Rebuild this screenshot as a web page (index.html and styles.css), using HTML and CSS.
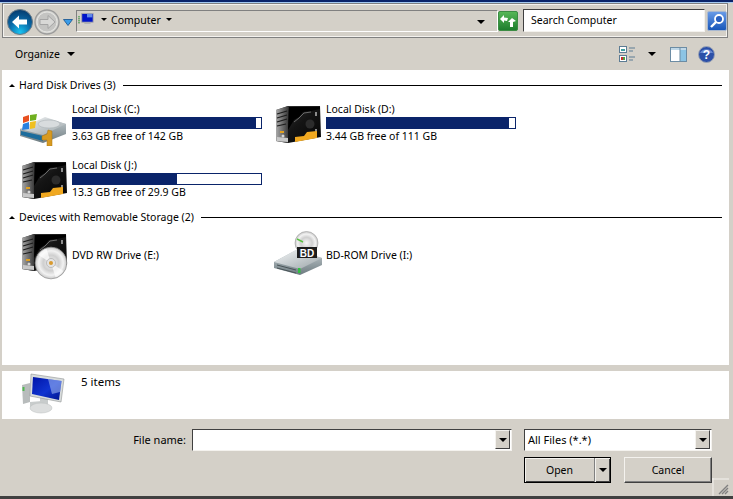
FILE: index.html
```html
<!DOCTYPE html>
<html lang="en">

<head>
    <meta charset="UTF-8">
    <meta name="viewport" content="width=device-width, initial-scale=1.0">
    <title>Computer</title>
    <link rel="stylesheet" href="styles.css">
</head>

<body>
    <svg class="defs" aria-hidden="true">
        <defs>
            <linearGradient id="towerBody" x1="0" y1="0" x2="1" y2="1">
                <stop offset="0" stop-color="#3a3a3a" />
                <stop offset="0.5" stop-color="#141414" />
                <stop offset="1" stop-color="#050505" />
            </linearGradient>
            <linearGradient id="towerSide" x1="0" y1="0" x2="1" y2="0">
                <stop offset="0" stop-color="#a8a8a8" />
                <stop offset="1" stop-color="#3c3c3c" />
            </linearGradient>
            <linearGradient id="diskTop" x1="0" y1="0" x2="1" y2="1">
                <stop offset="0" stop-color="#f4f6f7" />
                <stop offset="1" stop-color="#9aa4a8" />
            </linearGradient>
            <linearGradient id="diskFront" x1="0" y1="0" x2="0" y2="1">
                <stop offset="0" stop-color="#c4ccd0" />
                <stop offset="1" stop-color="#6d7b80" />
            </linearGradient>
            <radialGradient id="discFace" cx="0.5" cy="0.5" r="0.55">
                <stop offset="0" stop-color="#f8f8f8" />
                <stop offset="0.45" stop-color="#cfcfcf" />
                <stop offset="0.7" stop-color="#f2f2f2" />
                <stop offset="1" stop-color="#b4b4b4" />
            </radialGradient>
            <linearGradient id="screen" x1="0" y1="0" x2="1" y2="1">
                <stop offset="0" stop-color="#0014a8" />
                <stop offset="0.55" stop-color="#1034d0" />
                <stop offset="1" stop-color="#00148c" />
            </linearGradient>
            <radialGradient id="backBall" cx="0.5" cy="0.9" r="0.9">
                <stop offset="0" stop-color="#19c4f2" />
                <stop offset="0.5" stop-color="#0a6aa8" />
                <stop offset="1" stop-color="#063a6c" />
            </radialGradient>
            <linearGradient id="goGreen" x1="0" y1="0" x2="0" y2="1">
                <stop offset="0" stop-color="#58b858" />
                <stop offset="1" stop-color="#1c7c2c" />
            </linearGradient>
            <linearGradient id="searchBlue" x1="0" y1="0" x2="0" y2="1">
                <stop offset="0" stop-color="#6a9ce8" />
                <stop offset="1" stop-color="#1654b8" />
            </linearGradient>

            <symbol id="tower" viewBox="0 0 48 48">
                <path d="M2 12 L14 8 L46 8 L47 39 L14 45 L2 43 Z" fill="url(#towerBody)" />
                <path d="M2 12 L14 8 L14 45 L2 43 Z" fill="url(#towerSide)" />
                <path d="M3 16 L13 13 M3 20 L13 17 M3 24 L13 21 M3 28 L12 26" stroke="#1c1c1c" stroke-width="1.2" />
                <path d="M14 32 L20 22 L25 19 L29 14 L37 13 L46 11 L46 9 L15 9 Z" fill="#000" />
                <path d="M20 24 L25 20 L30 15 L37 14" stroke="#6a6a6a" fill="none" />
                <circle cx="36" cy="26" r="4.5" fill="#2c2c2c" />
                <path d="M41 14 h2 v4 h-2 Z M41 31 h2 v4 h-2 Z" fill="#8c8c8c" />
                <path d="M6 33 h4 v2 h-4 Z" fill="#e0a020" />
                <circle cx="9" cy="38" r="1.5" fill="#d8d8d8" />
                <path d="M3 43 L14 44 L14 40 L3 39 Z" fill="#c8c8c8" />
                <path d="M21 44 L43 40 L43 33 L33 34 L30 38 L21 39 Z" fill="#f0a820" />
            </symbol>

            <symbol id="disc" viewBox="0 0 30 30">
                <circle cx="15" cy="15" r="14" fill="url(#discFace)" stroke="#8c8c8c" stroke-width="0.6" />
                <path d="M15 15 L4 8 A13 13 0 0 1 11 2.5 Z" fill="#fff" opacity="0.7" />
                <path d="M15 15 L26 22 A13 13 0 0 1 19 27.5 Z" fill="#fff" opacity="0.7" />
                <circle cx="15" cy="15" r="4" fill="#e4e4e4" stroke="#a0a0a0" stroke-width="0.5" />
                <circle cx="15" cy="15" r="1.8" fill="#d89a30" />
            </symbol>

            <symbol id="sysDisk" viewBox="0 0 48 48">
                <path d="M0 31 L25 20 L46 26 L46 36 L23 45 L0 38 Z" fill="url(#diskFront)" />
                <path d="M0 31 L25 19 L46 26 L23 37 Z" fill="url(#diskTop)" />
                <ellipse cx="29" cy="26" rx="11" ry="4" fill="#d8dcde" stroke="#a4acb0" stroke-width="0.5" />
                <path d="M1 33 L23 38 L23 43 L1 37 Z" fill="#1c6c9c" />
                <path d="M3 19 L9 17 L9 23 L3 25 Z" fill="#e85020" />
                <path d="M10 17 L17 16 L16 22 L10 23 Z" fill="#70b020" />
                <path d="M3 26 L9 24 L9 31 L2 32 Z" fill="#2880e0" />
                <path d="M10 24 L16 23 L15 30 L10 31 Z" fill="#f0c020" />
                <path d="M22 38 L27 36 L28 32 L32 33 L32 48 L27 48 L27 42 L22 42 Z" fill="#d89a20" stroke="#a87410" stroke-width="0.5" />
            </symbol>

            <symbol id="bdDrive" viewBox="0 0 48 48">
                <circle cx="32.5" cy="12" r="11.5" fill="url(#discFace)" stroke="#909090" stroke-width="0.5" />
                <path d="M23 8 L29 11" stroke="#58c040" stroke-width="1.4" />
                <path d="M0 31 L22 19 L48 27 L48 34 L26 44 L0 37 Z" fill="url(#diskFront)" />
                <path d="M0 31 L22 19 L48 27 L26 38 Z" fill="url(#diskTop)" />
                <path d="M3 34 L22 39 M3 37 L22 42" stroke="#4a5458" stroke-width="1" />
                <rect x="24" y="37" width="2.5" height="5" fill="#30c040" />
                <rect x="23" y="16" width="20" height="11" fill="#1c1c1c" />
                <text class="bd-label" x="33" y="25.5">BD</text>
            </symbol>

            <symbol id="monitor" viewBox="0 0 48 48">
                <path d="M2 13 L10 11 L10 30 L3 32 Z" fill="#b8bcbc" />
                <path d="M2.5 15 L4.5 15 L4.5 19 L2.5 19 Z" fill="#50b850" />
                <path d="M10 30 L22 29 L20 33 L10 35 Z" fill="#c8cccc" />
                <rect x="20" y="26" width="8" height="8" fill="#c8cccc" />
                <ellipse cx="21" cy="36" rx="11" ry="5" fill="#dcdede" stroke="#b8bcbc" stroke-width="0.5" />
                <path d="M11 2 L44 7 L41 30 L10 24 Z" fill="#d8dcdc" stroke="#909494" stroke-width="0.6" />
                <path d="M13 5 L41.5 9 L39 28 L12 22 Z" fill="url(#screen)" />
                <path d="M28 7 L41.5 9 L40 20 L32 22 Z" fill="#a8c0f4" opacity="0.55" />
            </symbol>
        </defs>
    </svg>

    <div class="dialog">
        <div class="nav-bar">
            <svg class="nav-btn" viewBox="0 0 26 26">
                <circle cx="13" cy="13" r="12.5" fill="url(#backBall)" stroke="#6c7c88" />
                <path d="M5 13 L12 6.5 L12 10.5 L20 10.5 L20 15.5 L12 15.5 L12 19.5 Z" fill="#fff" />
            </svg>
            <svg class="nav-btn fwd" viewBox="0 0 26 26">
                <circle cx="13" cy="13" r="12" fill="#d4d4d0" stroke="#9c9c9c" stroke-width="1.4" />
                <circle cx="13" cy="13" r="10" fill="#c4c4c2" stroke="#e4e4e2" />
                <path d="M21 13 L14 6.5 L14 10.5 L6 10.5 L6 15.5 L14 15.5 L14 19.5 Z" fill="#d8d8d6" stroke="#a4a4a4" />
            </svg>
            <svg class="history-arrow" viewBox="0 0 10 7">
                <path d="M0.5 0.5 H9.5 L5 6.5 Z" fill="#3a9ce8" stroke="#14508c" stroke-width="0.8" />
            </svg>

            <div class="address">
                <span class="addr-grip"></span>
                <svg class="addr-icon" viewBox="0 0 16 16">
                    <rect x="2" y="0.5" width="13" height="10" fill="#0014c8" stroke="#a8a8a8" />
                    <rect x="8" y="1" width="6" height="4" fill="#6088e8" />
                    <rect x="5" y="11" width="7" height="1.5" fill="#b0b0b0" />
                    <rect x="3" y="13" width="11" height="1.5" fill="#d0d0d0" />
                </svg>
                <span class="tri small-tri first-tri"></span>
                <span class="addr-text">Computer</span>
                <span class="tri small-tri"></span>
                <span class="addr-drop"><span class="tri"></span></span>
            </div>

            <svg class="go-btn" viewBox="0 0 20 20">
                <rect x="0.5" y="0.5" width="19" height="19" rx="1.5" fill="url(#goGreen)" stroke="#3c8c44" />
                <path d="M2 8 L6 4 L6 6.5 L10 7 L9 10 L6 9.5 L6 12 Z" fill="#fff" />
                <path d="M18 10 L14 7 L10 11 L12 11 L12 16 L15 16 L15 11 Z" fill="#fff" />
            </svg>

            <div class="search-box">Search Computer</div>

            <svg class="search-btn" viewBox="0 0 20 20">
                <rect x="0.5" y="0.5" width="19" height="19" rx="1.5" fill="url(#searchBlue)" stroke="#a8b8d0" />
                <circle cx="12" cy="8" r="4" fill="#2a60c0" stroke="#fff" stroke-width="1.8" />
                <path d="M9 11 L4 16" stroke="#fff" stroke-width="2.4" />
            </svg>
        </div>

        <div class="toolbar">
            <span class="organize">Organize</span>
            <span class="tri"></span>
            <span class="toolbar-spacer"></span>
            <svg class="views-icon" viewBox="0 0 17 17">
                <rect x="0.5" y="0.5" width="7" height="6" fill="#fff" stroke="#5c7c94" />
                <rect x="2" y="3" width="4" height="2" fill="#40a0a0" />
                <rect x="0.5" y="9.5" width="7" height="6" fill="#fff" stroke="#5c7c94" />
                <rect x="2" y="11" width="2" height="3" fill="#c83030" />
                <rect x="4" y="11" width="2" height="3" fill="#50a040" />
                <path d="M10 2 H16 M10 5 H14 M10 11 H16 M10 14 H14" stroke="#5c7c94" stroke-width="1.2" />
            </svg>
            <span class="tri views-tri"></span>
            <svg class="pane-icon" viewBox="0 0 17 15">
                <rect x="0.5" y="0.5" width="16" height="14" fill="#fff" stroke="#6c8ca4" />
                <rect x="10" y="1" width="6" height="13" fill="#8cc4e4" />
                <rect x="1" y="1" width="15" height="2" fill="#c0d8e8" />
                <path d="M10 1 V14" stroke="#6c8ca4" />
            </svg>
            <svg class="help-icon" viewBox="0 0 17 17">
                <circle cx="8.5" cy="8.5" r="8" fill="#2c50a8" stroke="#9ca4b4" />
                <path d="M2 7 A7 6 0 0 1 15 7 Z" fill="#6888d0" />
                <text class="help-mark" x="8.5" y="13">?</text>
            </svg>
        </div>

        <div class="content">
            <div class="group-head">
                <span class="collapse"></span>
                <span class="group-name">Hard Disk Drives (3)</span>
                <span class="group-line"></span>
            </div>
            <div class="tiles hard-disks">
                <div class="tile">
                    <svg class="drive-icon"><use href="#sysDisk" /></svg>
                    <div class="tile-text">
                        <div class="drive-name">Local Disk (C:)</div>
                        <div class="bar"><div class="bar-fill" style="width: 97.4%"></div></div>
                        <div class="drive-free">3.63 GB free of 142 GB</div>
                    </div>
                </div>
                <div class="tile">
                    <svg class="drive-icon"><use href="#tower" /></svg>
                    <div class="tile-text">
                        <div class="drive-name">Local Disk (D:)</div>
                        <div class="bar"><div class="bar-fill" style="width: 96.9%"></div></div>
                        <div class="drive-free">3.44 GB free of 111 GB</div>
                    </div>
                </div>
                <div class="tile">
                    <svg class="drive-icon"><use href="#tower" /></svg>
                    <div class="tile-text">
                        <div class="drive-name">Local Disk (J:)</div>
                        <div class="bar"><div class="bar-fill" style="width: 55.5%"></div></div>
                        <div class="drive-free">13.3 GB free of 29.9 GB</div>
                    </div>
                </div>
            </div>

            <div class="group-head second">
                <span class="collapse"></span>
                <span class="group-name">Devices with Removable Storage (2)</span>
                <span class="group-line"></span>
            </div>
            <div class="tiles">
                <div class="tile">
                    <div class="dvd-icon">
                        <svg class="drive-icon"><use href="#tower" /></svg>
                        <svg class="dvd-disc"><use href="#disc" /></svg>
                    </div>
                    <div class="tile-text">
                        <div class="drive-name">DVD RW Drive (E:)</div>
                    </div>
                </div>
                <div class="tile">
                    <svg class="drive-icon"><use href="#bdDrive" /></svg>
                    <div class="tile-text">
                        <div class="drive-name">BD-ROM Drive (I:)</div>
                    </div>
                </div>
            </div>
        </div>

        <div class="details">
            <svg class="details-icon"><use href="#monitor" /></svg>
            <span class="item-count">5 items</span>
        </div>

        <div class="footer">
            <div class="file-row">
                <label class="file-label">File name:</label>
                <div class="field name-field">
                    <span class="field-value"></span>
                    <span class="drop-btn"><span class="tri"></span></span>
                </div>
                <div class="field type-field">
                    <span class="field-value">All Files (*.*)</span>
                    <span class="drop-btn"><span class="tri"></span></span>
                </div>
            </div>
            <div class="button-row">
                <div class="btn open-btn">
                    <span class="open-label">Open</span>
                    <span class="open-split"><span class="tri"></span></span>
                </div>
                <div class="btn cancel-btn">Cancel</div>
                <svg class="grip" viewBox="0 0 17 18">
                    <path d="M0 1 H17 M1 0 V18" stroke="#f4f2ee" />
                    <path d="M16 7 L7 16 M16 10 L10 16 M16 13 L13 16" stroke="#808080" stroke-width="1.4" />
                </svg>
            </div>
        </div>
    </div>
</body>

</html>
```

FILE: styles.css
```css
body {
    margin: 0;
    font-family: 'Noto Sans', sans-serif;
    font-size: 10.5px;
    line-height: 14px;
    color: #000;
    background-color: #D4D0C8;
}

.defs {
    display: block;
    width: 0;
    height: 0;
}

.dialog {
    display: flex;
    flex-direction: column;
    box-sizing: border-box;
    width: 733px;
    height: 499px;
    padding-top: 3px;
    border-bottom: 3px solid #404040;
    background-color: #D4D0C8;
    background-image: linear-gradient(#0A246A 2px, #A6CAF0 2px, #A6CAF0 3px, transparent 3px);
}

.tri {
    display: inline-block;
    width: 0;
    height: 0;
    border-left: 4px solid transparent;
    border-right: 4px solid transparent;
    border-top: 4px solid #000;
}

.small-tri {
    border-left-width: 3px;
    border-right-width: 3px;
    border-top-width: 3px;
}

.nav-bar {
    display: flex;
    align-items: center;
    box-sizing: border-box;
    height: 35px;
    margin: 0 5px 0 2px;
    padding: 0 0 0 4px;
    border: 1px solid #808080;
    box-shadow: inset 0 0 0 1px #F4F2EE;
}

.nav-btn {
    flex: none;
    width: 26px;
    height: 26px;
    margin-top: 2px;
}

.fwd {
    margin-left: 1px;
}

.history-arrow {
    flex: none;
    width: 10px;
    height: 7px;
    margin: 3px 3px 0 3px;
}

.address {
    display: flex;
    flex: none;
    align-items: center;
    box-sizing: border-box;
    width: 422px;
    height: 22px;
    padding: 0 4px 2px 1px;
    border-top: 1px solid #808080;
    border-left: 1px solid #808080;
    border-bottom: 1px solid #FFFFFF;
    border-right: 1px solid #FFFFFF;
}

.addr-grip {
    width: 2px;
    height: 8px;
    background: repeating-linear-gradient(#70B070 0 1px, #B0B0A8 1px 2px);
}

.addr-icon {
    width: 14px;
    height: 14px;
}

.first-tri {
    margin-left: 7px;
}

.addr-text {
    margin: 0 5px 0 4px;
}

.addr-drop {
    margin-left: auto;
    margin-right: 8px;
}

.go-btn {
    flex: none;
    width: 20px;
    height: 20px;
}

.search-box {
    flex: none;
    box-sizing: border-box;
    width: 182px;
    height: 23px;
    margin-left: 5px;
    padding: 3px 7px;
    background-color: #FFFFFF;
    border: 1px solid #404040;
    border-right-color: #F4F2EE;
    border-bottom-color: #F4F2EE;
}

.search-btn {
    flex: none;
    width: 20px;
    height: 20px;
    margin-left: 2px;
}

.toolbar {
    display: flex;
    align-items: center;
    height: 32px;
    padding: 0 14px 0 15px;
}

.organize {
    margin-right: 7px;
}

.toolbar-spacer {
    flex: 1;
}

.views-icon {
    width: 17px;
    height: 17px;
}

.views-tri {
    margin: 0 14px 0 12px;
}

.pane-icon {
    width: 17px;
    height: 15px;
}

.help-icon {
    width: 17px;
    height: 17px;
    margin: 0 4px 0 11px;
}

.help-mark {
    font-family: 'Liberation Sans', sans-serif;
    font-size: 12px;
    font-weight: bold;
    fill: #FFFFFF;
    text-anchor: middle;
}

.content {
    box-sizing: border-box;
    height: 295px;
    margin: 0 4px 0 2px;
    padding-top: 8px;
    background-color: #FFFFFF;
}

.group-head {
    display: flex;
    align-items: center;
    height: 14px;
    margin-right: 7px;
    padding-left: 7px;
}

.group-head.second {
    margin-top: 4px;
}

.collapse {
    width: 0;
    height: 0;
    margin-right: 4px;
    border-left: 3px solid transparent;
    border-right: 3px solid transparent;
    border-bottom: 3px solid #000;
}

.group-name {
    margin-right: 7px;
}

.group-line {
    flex: 1;
    height: 1px;
    background-color: #000;
}

.tiles {
    display: grid;
    grid-template-columns: repeat(2, 254px);
    grid-auto-rows: 56px;
    padding: 3px 0 0 18px;
}

.tiles.hard-disks {
    padding-top: 2px;
}

.tile {
    display: flex;
    align-items: center;
    gap: 4px;
}

.drive-icon {
    display: block;
    flex: none;
    width: 48px;
    height: 48px;
}

.dvd-icon {
    display: flex;
    width: 48px;
    height: 48px;
}

.dvd-icon .drive-icon {
    margin-top: -5px;
}

.dvd-disc {
    flex: none;
    width: 34px;
    height: 34px;
    margin: 15px 0 0 -34px;
}

.bar {
    box-sizing: border-box;
    width: 190px;
    height: 12px;
    margin: 1px 0 0;
    border: 1px solid #0A246A;
    background-color: #FFFFFF;
}

.bar-fill {
    height: 100%;
    background-color: #0A246A;
}

.details {
    display: flex;
    box-sizing: border-box;
    height: 48px;
    margin: 6px 4px 0 2px;
    padding: 2px 0 0 18px;
    background-color: #FFFFFF;
}

.details-icon {
    width: 48px;
    height: 48px;
    margin-top: -1px;
}

.item-count {
    margin: 2px 0 0 13px;
    font-size: 11.5px;
}

.footer {
    display: flex;
    flex: 1;
    flex-direction: column;
    padding-top: 10px;
}

.file-row {
    display: flex;
    align-items: center;
    height: 22px;
}

.file-label {
    width: 186px;
    font-size: 11px;
    text-align: right;
}

.field {
    display: flex;
    box-sizing: border-box;
    height: 22px;
    background-color: #FFFFFF;
    border: 1px solid #404040;
    border-right-color: #F4F2EE;
    border-bottom-color: #F4F2EE;
}

.name-field {
    width: 320px;
    margin-left: 6px;
}

.type-field {
    width: 188px;
    margin-left: 12px;
}

.field-value {
    flex: 1;
    padding: 3px;
    font-size: 11px;
}

.drop-btn {
    display: flex;
    align-items: center;
    justify-content: center;
    box-sizing: border-box;
    width: 15px;
    margin: 0 1px 1px 0;
    background-color: #D4D0C8;
    border: 1px solid;
    border-color: #F4F2EE #404040 #404040 #F4F2EE;
}

.button-row {
    display: flex;
    height: 39px;
    margin-top: 6px;
    padding-left: 524px;
}

.btn {
    display: flex;
    align-items: center;
    justify-content: center;
    box-sizing: border-box;
    height: 26px;
    border: 1px solid;
    border-color: #F4F2EE #404040 #404040 #F4F2EE;
    box-shadow: inset -1px -1px 0 #808080;
}

.open-btn {
    width: 87px;
    border-color: #000;
    box-shadow: inset 1px 1px 0 #F4F2EE, inset -1px -1px 0 #404040;
}

.open-label {
    flex: 1;
    text-align: center;
}

.open-split {
    display: flex;
    align-items: center;
    justify-content: center;
    width: 15px;
    height: 100%;
    border-left: 1px solid #808080;
    box-shadow: inset 1px 0 0 #F4F2EE;
}

.cancel-btn {
    width: 88px;
    margin-left: 13px;
}

.grip {
    width: 17px;
    height: 18px;
    margin-top: 21px;
}

.bd-label {
    font-family: 'Liberation Sans', sans-serif;
    font-size: 10px;
    font-weight: bold;
    fill: #FFFFFF;
    text-anchor: middle;
}
```
